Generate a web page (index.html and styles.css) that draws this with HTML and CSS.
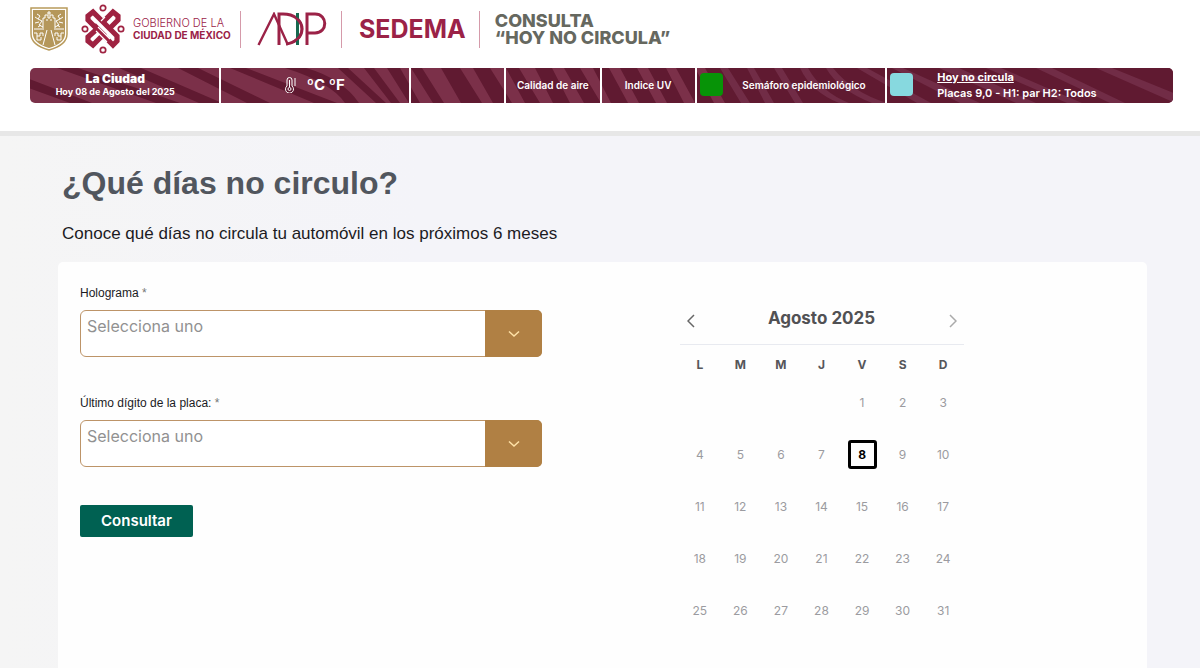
FILE: index.html
```html
<!DOCTYPE html>
<html lang="es">
<head>
<meta charset="utf-8">
<meta name="viewport" content="width=device-width, initial-scale=1">
<title>Consulta Hoy No Circula</title>
<link rel="stylesheet" href="styles.css">
</head>
<body>
<header class="site-header">
  <div class="brands">
    <svg class="shield" viewBox="0 0 38 44" aria-hidden="true">
      <path d="M1 1H37V27Q37 38 19 43Q1 38 1 27Z" fill="#fff" stroke="#b89a5b" stroke-width="1.5"/>
      <path d="M3 3H35V27Q35 36 19 41Q3 36 3 27Z" fill="#b5975a"/>
      <g fill="none" stroke="#fff" stroke-width="1">
        <path d="M13 21V11h2V8h3v3h2V8h3v3h2v10M16 13h2M20 13h2M17 6h4M19 4v4"/>
        <path d="M7 7l3 2-2 3 4 2-3 4 4 2M5 10l3 2M5 16l4-1M8 20l3-2M31 7l-3 2 2 3-4 2 3 4-4 2M33 10l-3 2M33 16l-4-1M30 20l-3-2"/>
        <path d="M4 22h10M24 22h10M17 23l-4 15M21 23l4 15M4 26h3v3h3v-3h3v3M34 26h-3v3h-3v-3h-3v3M7 29v4h4v-3M31 29v4h-4v-3"/>
      </g>
    </svg>
    <svg class="cdmx" viewBox="0 0 44 50" aria-hidden="true">
      <g fill="none" stroke="#9f2241" stroke-width="1.7">
        <circle cx="22" cy="4" r="2.7"/><circle cx="22" cy="46" r="2.7"/><circle cx="4" cy="25" r="2.7"/><circle cx="40" cy="25" r="2.7"/>
      </g>
      <g fill="none" stroke="#9f2241" stroke-width="5.2" stroke-linejoin="miter">
        <path d="M16 25L7 16V12L12 8L36 32V37L32 41L23 32"/>
        <path d="M28 25L37 16V12L32 8L22 18"/>
        <path d="M24 32L13 21M16 25L7 33V37L12 41L22 31"/>
      </g>
      <path d="M17 23l12 12M15 27l11 11M20 17l4-4M24 37l-4 4" stroke="#fff" stroke-width="1.2"/>
    </svg>
    <div class="gov"><span>GOBIERNO DE LA</span><strong>CIUDAD DE MÉXICO</strong></div>
    <svg class="adip" viewBox="0 0 70 34" aria-hidden="true">
      <g fill="none" stroke="#9b2247" stroke-width="3">
        <path d="M1.500 33L17 2L31 33" stroke-width="2.400"/>
        <path d="M22 33V2H26C37 2 45 8 45 17C45 25 38 31 29 32"/>
        <path d="M50 33V2H58C71 2 71 21 58 21H50"/>
      </g>
      <path d="M40.500 1V33" stroke="#17694f" stroke-width="3"/>
      <path d="M39 6Q45 11 45 17Q45 25 36 30" fill="none" stroke="#9b2247" stroke-width="2.500"/>
    </svg>
    <div class="sedema">SEDEMA</div>
    <div class="program">CONSULTA<br>“HOY NO CIRCULA”</div>
  </div>
  <div class="info-bar">
    <svg class="stripes" viewBox="0 0 1143 34" preserveAspectRatio="none" aria-hidden="true">
      <rect width="1143" height="34" fill="#7b3049"/>
      <g fill="#601a31">
        <path d="M0 11L62 34H40L0 20ZM27 0H48L150 34H126ZM89 0H111L192 34H169ZM148 0H168L240 34H217ZM200 0H216L307 34H284ZM255 0H276Q312 10 329 34H315Q301 14 255 0ZM308 0H318L356 34H346ZM334 0H344L370 34H361ZM357 0H370L390 34H379Z"/>
        <path d="M381 0H392L414 34H403ZM411 0H430L452 34H431ZM443 0H460L482 34H463ZM476 0H489L510 34H495ZM505 0H522L540 34H523ZM534 0H550L571 34H554ZM563 0H579L598 34H581ZM590 0H607L626 34H609ZM618 0H636L654 34H637ZM646 0H665L684 34H665ZM675 0H1143V34H695Z"/>
      </g>
      <path d="M690 0h8l22 34h-9ZM717 0h7l20 34h-9ZM744 0h8l21 34h-8ZM770 0h8Q791 23 819 34H809Q781 23 770 0ZM796 0h7Q823 24 857 34H842Q808 21 796 0ZM827 0h10L901 34H887ZM862 0h11L950 34H930ZM909 0h20L1006 34H986ZM956 0h15L1052 34H1037ZM1006 0h16L1095 34H1080ZM1066 0h16L1143 24V33Z" fill="#712c46"/>
    </svg>
    <div class="cell city"><strong>La Ciudad</strong><span>Hoy 08 de Agosto del 2025</span></div>
    <div class="cell weather">
      <svg class="thermo" viewBox="0 0 12 16" aria-hidden="true"><g fill="none" stroke="#fff" stroke-width="1"><path d="M2 9V3a2.500 2.500 0 0 1 5 0V9a4 4 0 1 1-5 0Z"/><circle cx="4.500" cy="12" r="1.500"/><path d="M4.500 3v7M9 2h2M9 4h2M9 6h2M9 8h2"/></g></svg>
      <span>ºC ºF</span>
    </div>
    <div class="cell"></div>
    <div class="cell small">Calidad de aire</div>
    <div class="cell small">Indice UV</div>
    <div class="cell status small"><span class="swatch green"></span><span class="label">Semáforo epidemiológico</span></div>
    <div class="cell status"><span class="swatch blue"></span><div class="today"><a href="#calendario">Hoy no circula</a><span>Placas 9,0 - H1: par H2: Todos</span></div></div>
  </div>
</header>
<main class="content">
  <h1>¿Qué días no circulo?</h1>
  <p class="lead">Conoce qué días no circula tu automóvil en los próximos 6 meses</p>
  <section class="card">
    <form class="form">
      <label for="holo">Holograma <span>*</span></label>
      <div class="picker">
        <select id="holo"><option>Selecciona uno</option></select>
        <span class="arrow"><svg viewBox="0 0 12 8" aria-hidden="true"><path d="M1 1.500L6 6L11 1.500"/></svg></span>
      </div>
      <label for="digito">Último dígito de la placa: <span>*</span></label>
      <div class="picker">
        <select id="digito"><option>Selecciona uno</option></select>
        <span class="arrow"><svg viewBox="0 0 12 8" aria-hidden="true"><path d="M1 1.500L6 6L11 1.500"/></svg></span>
      </div>
      <button class="submit" type="button">Consultar</button>
    </form>
    <div class="calendar" id="calendario">
      <div class="month">
        <button type="button" aria-label="Mes anterior"><svg viewBox="0 0 8 14" aria-hidden="true"><path d="M7 1L1 7L7 13"/></svg></button>
        <h2>Agosto 2025</h2>
        <button class="next" type="button" aria-label="Mes siguiente"><svg viewBox="0 0 8 14" aria-hidden="true"><path d="M1 1L7 7L1 13"/></svg></button>
      </div>
      <table>
        <thead><tr><th>L</th><th>M</th><th>M</th><th>J</th><th>V</th><th>S</th><th>D</th></tr></thead>
        <tbody>
          <tr><td></td><td></td><td></td><td></td><td>1</td><td>2</td><td>3</td></tr>
          <tr><td>4</td><td>5</td><td>6</td><td>7</td><td><span class="current">8</span></td><td>9</td><td>10</td></tr>
          <tr><td>11</td><td>12</td><td>13</td><td>14</td><td>15</td><td>16</td><td>17</td></tr>
          <tr><td>18</td><td>19</td><td>20</td><td>21</td><td>22</td><td>23</td><td>24</td></tr>
          <tr><td>25</td><td>26</td><td>27</td><td>28</td><td>29</td><td>30</td><td>31</td></tr>
        </tbody>
      </table>
    </div>
  </section>
</main>
</body>
</html>
```
FILE: styles.css
```css
* { box-sizing: border-box; }
body {
  margin: 0;
  min-height: 100vh;
  display: flex;
  flex-direction: column;
  font-family: Inter, "Liberation Sans", sans-serif;
  color: #1b1b1f;
  background: linear-gradient(90deg, #f5f5f5, #f4f4f9 35%, #f4f4f9);
}
.site-header {
  padding: 4px 27px 28px 30px;
  background: #fff;
  border-bottom: 5px solid #e7e7e7;
}
.brands { display: flex; align-items: center; height: 50px; color: #9b2247; }
.shield { width: 38px; height: 44px; }
.cdmx { width: 44px; height: 50px; margin: 0 8px 0 13px; }
.gov {
  display: flex;
  flex-direction: column;
  width: 108px;
  height: 37px;
  justify-content: center;
  border-right: 1px solid #d59aaa;
  font: 10px/12px Inter, sans-serif;
  white-space: nowrap;
}
.gov span { font-size: 11px; font-weight: 300; }
.gov strong { font-weight: 700; }
.adip { width: 70px; height: 34px; margin: 0 14px 0 16px; }
.sedema {
  height: 37px;
  padding: 0 13px 0 17px;
  border: solid #d59aaa;
  border-width: 0 1px;
  font-size: 25px;
  line-height: 37px;
  font-weight: 700;
}
.program { padding-left: 15px; color: #66685f; font-size: 18px; line-height: 17px; font-weight: 800; white-space: nowrap; }

.info-bar {
  position: relative;
  display: grid;
  grid-template-columns: 2fr 2fr 1fr 1fr 1fr 2fr 3fr;
  margin-top: 14px;
  height: 35px;
  border-radius: 5px;
  overflow: hidden;
  color: #fff;
  white-space: nowrap;
}
.stripes { position: absolute; inset: 0; width: 100%; height: 100%; }
.cell { position: relative; min-width: 0; display: flex; align-items: center; justify-content: center; padding-bottom: 2px; border-right: 2px solid #fff; }
.cell:last-child { border-right: 0; }
.city { flex-direction: column; padding-right: 18px; font-size: 9px; line-height: 13px; font-weight: 700; }
.city strong { font-size: 12px; }
.weather { gap: 10px; font-size: 15px; font-weight: 700; }
.thermo { width: 12px; height: 16px; }
.small { font-size: 10px; font-weight: 600; }
.status { justify-content: flex-start; padding-left: 3px; }
.label { flex: 1; text-align: center; }
.swatch { width: 23px; height: 23px; border-radius: 4px; }
.green { background: #079307; }
.blue { background: #87d9df; }
.today { display: flex; flex-direction: column; padding-left: 24px; font-size: 11px; line-height: 16px; font-weight: 600; }
.today a { color: inherit; font-weight: 700; }

.content { flex: 1; display: flex; flex-direction: column; padding: 26px 53px 0 58px; }
h1 { margin: 0; padding-left: 4px; font: 700 32px/42px "Liberation Sans", Arial, sans-serif; color: #51565e; }
.lead { margin: 19px 0 18px; padding-left: 4px; font: 17px/21px "Liberation Sans", Arial, sans-serif; }
.card { flex: 1; display: grid; grid-template-columns: 2fr 2fr; padding: 24px 22px 0; border-radius: 5px 5px 0 0; background: #fefefe; }
.form { display: flex; flex-direction: column; align-items: flex-start; }
.form label { font: 12px/14px "Liberation Sans", Arial, sans-serif; }
.form label span { color: #777; }
.picker { display: grid; width: 462px; max-width: 94%; height: 47px; margin: 10px 0 39px; }
.picker select {
  grid-area: 1 / 1;
  appearance: none;
  width: 100%;
  padding: 0 60px 16px 6px;
  border: 1px solid #bd9468;
  border-radius: 6px;
  background: #fff;
  color: #919191;
  font: 16px/20px Inter, sans-serif;
}
.arrow {
  grid-area: 1 / 1;
  justify-self: end;
  display: grid;
  place-items: center;
  width: 57px;
  position: relative;
  pointer-events: none;
  border-radius: 0 5px 5px 0;
  background: #b08044;
}
.arrow svg { width: 12px; height: 8px; fill: none; stroke: #ffe2a8; stroke-width: 1.5; }
.submit { width: 113px; height: 32px; margin-top: -1px; padding: 0; border: 0; border-radius: 2px; background: #006152; color: #fff; font: 600 15px/20px Inter, sans-serif; }

.calendar { width: 284px; margin: 14px 0 0 77px; }
.month { display: flex; align-items: center; justify-content: space-between; height: 45px; padding: 0 6px; border-bottom: 1px solid #e8eaf0; }
.month h2 { margin: 0; padding-bottom: 8px; font-size: 17px; line-height: 24px; font-weight: 700; color: #515154; }
.month button { display: flex; width: 10px; height: 22px; padding: 3px 1px; border: 0; background: none; }
.month svg { width: 8px; height: 14px; fill: none; stroke: #666; stroke-width: 1.500; }
.month .next svg { stroke: #aaa; }
table { width: 100%; table-layout: fixed; border-collapse: collapse; text-align: center; }
th { height: 31px; padding: 8px 0 0; font-size: 12px; font-weight: 700; color: #56565a; }
td { height: 52px; padding: 0; font-size: 12px; color: #9b9ba0; }
.current { display: inline-grid; place-items: center; width: 29px; height: 29px; border: 3px solid #000; border-radius: 3px; color: #000; font-weight: 700; }
```
